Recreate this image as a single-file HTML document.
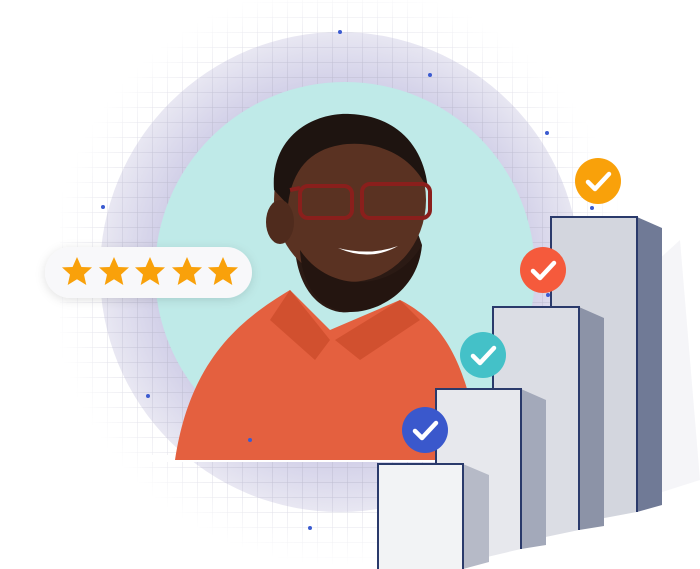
<!DOCTYPE html>
<html><head><style>
html,body{margin:0;padding:0;background:#fff;width:700px;height:569px;overflow:hidden;font-family:"Liberation Sans",sans-serif}
</style></head><body>
<svg width="700" height="569" viewBox="0 0 700 569" xmlns="http://www.w3.org/2000/svg">
<defs>
<pattern id="g" width="15" height="15" patternUnits="userSpaceOnUse" x="3" y="3">
<path d="M15 0V15H0" fill="none" stroke="#b9b8cc" stroke-width="1"/>
</pattern>
<radialGradient id="fade" cx="340" cy="275" r="290" gradientUnits="userSpaceOnUse">
<stop offset="0.72" stop-color="#fff" stop-opacity="1"/><stop offset="1" stop-color="#fff" stop-opacity="0"/>
</radialGradient>
<radialGradient id="lav" cx="342" cy="272" r="240" gradientUnits="userSpaceOnUse">
<stop offset="0.78" stop-color="#d2d0e8"/><stop offset="1" stop-color="#e8e7f2"/>
</radialGradient>
<mask id="m"><circle cx="340" cy="275" r="290" fill="url(#fade)"/></mask>
<clipPath id="tc"><circle cx="345" cy="272" r="190"/><rect x="150" y="272" width="400" height="190"/></clipPath>
<filter id="sh" x="-20%" y="-50%" width="140%" height="200%"><feDropShadow dx="0" dy="2" stdDeviation="5" flood-color="#000" flood-opacity="0.12"/></filter>
</defs>
<circle cx="340" cy="272" r="240" fill="url(#lav)"/>
<rect x="60" y="0" width="560" height="569" fill="url(#g)" mask="url(#m)" opacity="0.8"/>
<circle cx="345" cy="272" r="190" fill="#bfeae8"/>
<g clip-path="url(#tc)">
<rect x="150" y="455" width="400" height="20" fill="#fff"/>
<path d="M175 460 C190 360 240 320 290 290 L330 330 L400 300 C440 320 470 360 480 460 Z" fill="#e4603f"/>
<path d="M290 290 L330 340 L315 360 L270 320 Z" fill="#d1502f"/>
<path d="M400 300 L335 340 L360 360 L420 320 Z" fill="#d1502f"/>
<path d="M295 250 C300 300 330 315 350 312 C390 306 412 285 422 245 L415 225 L300 230 Z" fill="#2b1a14"/>
<ellipse cx="350" cy="200" rx="76" ry="82" fill="#5a3222"/>
<path d="M274 190 C270 135 315 112 350 114 C400 116 425 150 428 190 C410 150 370 140 340 145 C310 150 292 170 288 205 Z" fill="#1e1410"/>
<ellipse cx="280" cy="222" rx="14" ry="22" fill="#4f2b1d"/>
<path d="M300 250 C330 295 395 292 422 245 C418 290 380 312 350 312 C318 310 302 285 300 250 Z" fill="#241510"/>
<path d="M338 248 Q370 262 398 246 Q370 256 338 248Z" fill="#fff"/>
<path d="M290 190 L300 188" stroke="#8a1f1c" stroke-width="4"/>
<rect x="300" y="186" width="52" height="32" rx="8" fill="none" stroke="#8a1f1c" stroke-width="4"/>
<rect x="362" y="184" width="68" height="34" rx="8" fill="none" stroke="#8a1f1c" stroke-width="4"/>
</g>
<g fill="#3b5bd0"><circle cx="340" cy="32" r="2"/><circle cx="103" cy="207" r="2"/><circle cx="430" cy="75" r="2"/><circle cx="547" cy="133" r="2"/><circle cx="148" cy="396" r="2"/><circle cx="250" cy="440" r="2"/><circle cx="310" cy="528" r="2"/><circle cx="592" cy="208" r="2"/><circle cx="548" cy="295" r="2"/></g>
<rect x="45" y="247" width="207" height="51" rx="25.5" fill="#f8f8fa" filter="url(#sh)"/>
<g fill="#f9a10a">
<path id="st" d="M0 -15 L4.4 -5 L15 -4.6 L7 2.6 L9.3 13 L0 7.3 L-9.3 13 L-7 2.6 L-15 -4.6 L-4.4 -5 Z" transform="translate(77,272)"/>
<use href="#st" x="37"/><use href="#st" x="73"/><use href="#st" x="110"/><use href="#st" x="146"/>
</g>
<path d="M420 569 L700 480 L680 240 L440 460 Z" fill="#eeeff3" opacity="0.6"/>
<g stroke="#2a3a6b" stroke-width="2">
<path d="M637 217 L662 228 L662 505 L637 512 Z" fill="#707a96" stroke="none"/>
<path d="M551 528 L551 217 L637 217 L637 512" fill="#d3d6de"/>
<path d="M579 307 L604 318 L604 526 L579 530 Z" fill="#8c93a7" stroke="none"/>
<path d="M493 548 L493 307 L579 307 L579 530" fill="#dbdde4"/>
<path d="M521 389 L546 400 L546 545 L521 549 Z" fill="#a3a9ba" stroke="none"/>
<path d="M436 569 L436 389 L521 389 L521 549" fill="#e7e8ed"/>
<path d="M463 464 L489 475 L489 562 L463 569 Z" fill="#b6bac7" stroke="none"/>
<path d="M378 569 L378 464 L463 464 L463 569" fill="#f2f3f5"/>
</g>
<g stroke="#fff" stroke-width="4.5" fill="none" stroke-linecap="round" stroke-linejoin="round">
<circle cx="598" cy="181" r="23" fill="#f9a10a" stroke="none"/><path d="M588 182 L595 189 L609 174"/>
<circle cx="543" cy="270" r="23" fill="#f55a3c" stroke="none"/><path d="M533 271 L540 278 L554 263"/>
<circle cx="483" cy="355" r="23" fill="#44c1c8" stroke="none"/><path d="M473 356 L480 363 L494 348"/>
<circle cx="425" cy="430" r="23" fill="#3a58cc" stroke="none"/><path d="M415 431 L422 438 L436 423"/>
</g>
</svg>
</body></html>
